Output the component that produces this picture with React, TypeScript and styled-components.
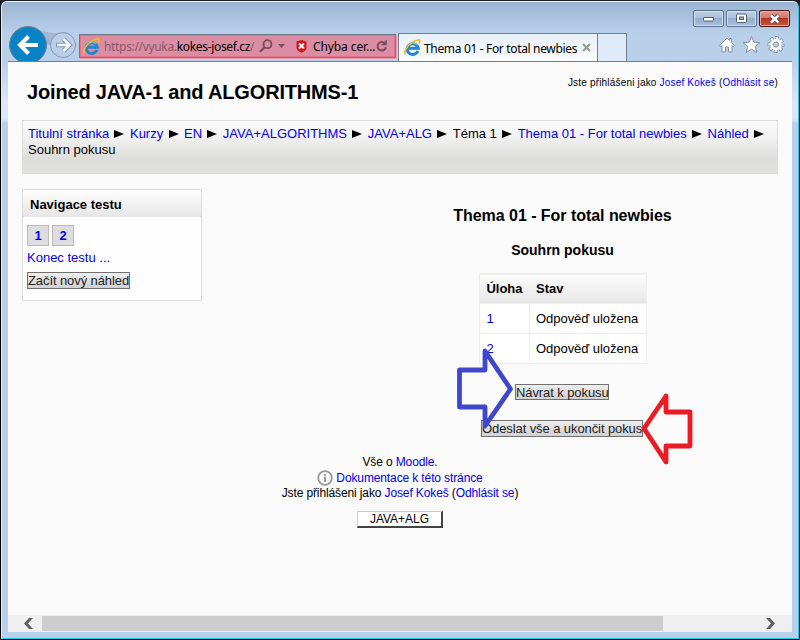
import React from "react";
import styled, { createGlobalStyle } from "styled-components";

const Global = createGlobalStyle`
  * { box-sizing: border-box; }
  html, body { margin: 0; background: #000; overflow: hidden; }
  body { font-family: "Liberation Sans", Arial, sans-serif; font-size: 13px; color: #000; }
`;

const Frame = styled.div`
  width: 800px;
  height: 640px;
  padding: 1px;
  background: linear-gradient(#1c1c24, #000 30px);
`;

const Window = styled.div`
  position: relative;
  height: 638px;
  padding: 0 6px 6px;
  display: flex;
  flex-direction: column;
  border: 1px solid #2cc8e8;
  border-top-color: #f4f8fc;
  border-left-color: #e2edf8;
  border-radius: 6px 6px 0 0;
  background: linear-gradient(#9ab4d2 0, #b9d0ea 32px, #b9d0ea 59px, #dbe7f5 100px, #dbe7f5 117px, #b9d0ea 121px);
`;

const Caption = styled.div`
  height: 31px;
  flex: none;
  display: flex;
  justify-content: flex-end;
  align-items: flex-start;
  gap: 2px;
  padding: 8px 2px 0 0;
`;

const CaptionButton = styled.div<{ $close?: boolean }>`
  width: 31px;
  height: 17px;
  display: flex;
  align-items: center;
  justify-content: center;
  border: 1px solid ${(p) => (p.$close ? "#4d1b1b" : "#59708c")};
  border-radius: 2px;
  box-shadow: inset 0 0 0 1px ${(p) => (p.$close ? "#e6a79e" : "#d3e1f0")};
  background: ${(p) =>
    p.$close
      ? "linear-gradient(#e09a8c, #d17868 46%, #b8371f 50%, #c9573f)"
      : "linear-gradient(#bfd1e6, #abc1da 46%, #94aecb 50%, #a8c0dc)"};
`;

const NavBar = styled.div`
  height: 28px;
  flex: none;
  display: flex;
  align-items: flex-start;
  font-family: "Noto Sans", "Open Sans", sans-serif;
  font-size: 12px;
`;

const NavButtons = styled.svg`
  width: 71px;
  height: 35px;
  margin-top: -7px;
  flex: none;
`;

const AddressBar = styled.div`
  width: 317px;
  height: 24px;
  margin-top: 1px;
  padding: 0 4px 0 3px;
  flex: none;
  display: flex;
  align-items: center;
  border: 1px solid #6f7889;
  box-shadow: inset 0 0 0 1px #e5738b, 1px 1px 0 #e9a0b2;
  background: #db8da3;
`;

const Url = styled.div`
  width: 150px;
  margin-left: 4px;
  white-space: nowrap;
  color: #8a5968;
  letter-spacing: -0.33px;
  b { font-weight: 400; color: #000; }
`;

const ErrorText = styled.span`
  margin: 0 1px 0 6px;
  white-space: nowrap;
  letter-spacing: -0.1px;
`;

const Gap = styled.i<{ $w: number }>`
  width: ${(p) => p.$w}px;
  flex: none;
`;

const Tab = styled.div`
  width: 200px;
  height: 28px;
  margin-left: 2px;
  padding: 0 5px;
  flex: none;
  display: flex;
  align-items: center;
  border: 1px solid #6f8094;
  border-bottom: 0;
  background: linear-gradient(#e9f1fa, #fafafa);
`;

const TabTitle = styled.span`
  width: 156px;
  margin: 2px 2px 0 3px;
  white-space: nowrap;
  letter-spacing: -0.34px;
`;

const NewTab = styled.div`
  width: 29px;
  height: 28px;
  flex: none;
  border: 1px solid #6f8094;
  border-width: 1px 1px 0 0;
  background: #dfebf8;
`;

const Tools = styled.svg`
  width: 68px;
  height: 20px;
  margin: 2px 7px 0 auto;
`;

const Viewport = styled.div`
  position: relative;
  flex: 1;
  display: flex;
  flex-direction: column;
  border-top: 1px solid #6f8094;
  background: #fafafa;
`;

const Page = styled.div`
  flex: 1;
  padding: 0 14px;
`;

const Header = styled.header`
  height: 58px;
  display: flex;
  justify-content: space-between;
  padding-left: 5px;
`;

const SiteTitle = styled.h1`
  margin: 18px 0 0;
  font-size: 20px;
  line-height: 24px;
  letter-spacing: -0.17px;
  white-space: nowrap;
`;

const Login = styled.div`
  margin-top: 14px;
  font-size: 10px;
  line-height: 13px;
  letter-spacing: 0.18px;
  white-space: nowrap;
`;

const Link = styled.a`
  color: #0000f0;
`;

const Crumbs = styled.nav`
  height: 54px;
  padding: 5px 5px 0;
  border: 1px solid #dcdcdc;
  line-height: 16px;
  white-space: nowrap;
  background: linear-gradient(#fafafa, #f3f3f3 14px, #dededd 37px, #e1e1df);
`;

const CrumbLine = styled.div`
  display: flex;
  align-items: center;
`;

const Separator = styled.i`
  width: 10px;
  margin: 0 5.5px 0 5.3px;
  border: solid transparent;
  border-width: 4px 0 4px 10px;
  border-left-color: #000;
`;

const Columns = styled.div`
  display: flex;
  justify-content: space-between;
  align-items: flex-start;
  height: 281px;
  padding-top: 15px;
`;

const Block = styled.aside`
  width: 180px;
  height: 112px;
  border: 1px solid #dcdcdc;
  background: #fdfdfd;
`;

const BlockTitle = styled.h2`
  height: 27px;
  margin: 0;
  padding-left: 7px;
  font-size: 13px;
  line-height: 30px;
  background: linear-gradient(#fdfdfd, #e6e6e6);
`;

const BlockBody = styled.div`
  display: flex;
  flex-direction: column;
  align-items: flex-start;
  padding: 8px 4px;
`;

const Numbers = styled.div`
  display: flex;
  gap: 3px;
`;

const NumberLink = styled.a`
  width: 22px;
  height: 21px;
  border: 1px solid #bbb;
  background: #ddd;
  color: #0000f0;
  font-weight: bold;
  line-height: 20px;
  text-align: center;
`;

const BlockLink = styled(Link)`
  margin: 4px 0 6px;
  line-height: 16px;
`;

const Button = styled.button<{ $w: number; $h?: number }>`
  width: ${(p) => p.$w}px;
  height: ${(p) => p.$h ?? 17}px;
  padding: 0;
  display: flex;
  align-items: center;
  justify-content: flex-start;
  border: 1px solid #707070;
  background: linear-gradient(#efefef, #ddd 55%, #d2d2d4);
  color: #222;
  font: 13px/15px "Liberation Sans", Arial, sans-serif;
  letter-spacing: -0.09px;
  white-space: nowrap;
`;

const Main = styled.main`
  width: 431px;
  display: flex;
  flex-direction: column;
  align-items: center;
`;

const Heading = styled.h2`
  margin: 16px 0 0;
  font-size: 16px;
  line-height: 22px;
  letter-spacing: -0.04px;
`;

const SubHeading = styled.h3`
  margin: 14px 0 14px;
  font-size: 14px;
  line-height: 18px;
`;

const Summary = styled.table`
  width: 168px;
  border-collapse: collapse;
  background: #fff;
  th, td { height: 30px; padding: 0 6.500px 0 7px; text-align: left; border: 1px solid #eee; white-space: nowrap; }
  th { border-color: #eee transparent; background: linear-gradient(#fcfcfc, #e6e6e6); }
  th:first-child { width: 50px; border-left-color: #eee; padding-right: 5px; letter-spacing: -0.05px; }
  th:last-child { border-right-color: #eee; }
  td, th:last-child { padding-left: 6.500px; }
  td:first-child { padding-left: 7px; }
  td { letter-spacing: -0.04px; }
`;

const Actions = styled.div`
  display: flex;
  flex-direction: column;
  align-items: center;
  gap: 20px;
  margin: 20px 1px 0 0;
`;

const Footer = styled.footer`
  display: flex;
  flex-direction: column;
  align-items: center;
  font-size: 12px;
  line-height: 15px;
  letter-spacing: -0.12px;
`;

const DocLine = styled.div`
  height: 16px;
  display: flex;
  align-items: center;
  gap: 3px;
`;

const CourseLink = styled.a`
  width: 86px;
  height: 17px;
  margin-top: 10px;
  border: 1px solid #ccc;
  border-right: 2px solid #444;
  border-bottom: 2px solid #444;
  line-height: 14px;
  letter-spacing: 0;
  text-align: center;
  background: #fff;
`;

const ScrollBar = styled.div`
  height: 17px;
  display: flex;
  align-items: center;
  background: #efefef;
`;

const ScrollArrow = styled.svg`
  width: 10px;
  height: 11px;
  margin-left: 16px;
`;

const Thumb = styled.div`
  width: 621px;
  height: 15px;
  margin: 0 86px 0 8px;
  background: #cdcdcd;
`;

const Pointer = styled.svg<{ $x: number; $y: number }>`
  position: absolute;
  left: ${(p) => p.$x}px;
  top: ${(p) => p.$y}px;
  fill: none;
  stroke-width: 4.8;
  stroke-linejoin: round;
`;

const IeLogo = () => (
  <svg width="17" height="17" viewBox="0 0 17 17" fill="none">
    <path d="M14 12A5.6 5.3 0 1 1 14.3 9.3H4.5" stroke="#2385cf" strokeWidth="3" />
    <path d="M13.2 5.9A5.6 5.3 0 0 0 4.2 6.8" stroke="#6cc8f0" strokeWidth="1.2" />
    <path d="M1.2 15.2C-.4 12.8 3 6.7 8.6 3.1 12.2.8 15.7.2 16 2c.1.8-.4 1.9-.9 2.7" stroke="#f2bd21" strokeWidth="1.7" />
  </svg>
);

const LoginText = () => (
  <>Jste přihlášeni jako <Link>Josef Kokeš</Link> (<Link>Odhlásit se</Link>)</>
);

const crumbs = ["Titulní stránka", "Kurzy", "EN", "JAVA+ALGORITHMS", "JAVA+ALG", "Téma 1", "Thema 01 - For total newbies", "Náhled"];

export default function App() {
  return (
    <Frame>
      <Global />
      <Window>
        <Caption>
          <CaptionButton>
            <svg width="13" height="6"><rect x="1.5" y="1.5" width="10" height="3.5" rx="0.5" fill="#fff" stroke="#535f73" /></svg>
          </CaptionButton>
          <CaptionButton>
            <svg width="13" height="11" fill="none"><rect x="1.5" y="1" width="10" height="8.5" rx="1" fill="#fff" stroke="#535f73" /><rect x="4.5" y="4" width="4" height="2.5" fill="#96afcb" stroke="#535f73" /></svg>
          </CaptionButton>
          <CaptionButton $close>
            <svg width="14" height="12"><path d="M3 2.5l7.5 7M10.5 2.5l-7.5 7" stroke="#50455a" strokeWidth="4.4" /><path d="M3 2.5l7.5 7M10.5 2.5l-7.5 7" stroke="#fff" strokeWidth="2.5" /></svg>
          </CaptionButton>
        </Caption>
        <NavBar>
          <NavButtons viewBox="0 0 71 35" fill="none">
            <path d="M24 1c9 4 15 6 28 6v12H24z" fill="#a3b7d1" />
            <circle cx="20" cy="19" r="18.5" fill="#0a82c6" stroke="#6f8094" />
            <path d="M30 19H13M20.5 10.5L12 19l8.5 8.5" stroke="#fff" strokeWidth="4" />
            <circle cx="55" cy="19" r="12.5" fill="#bbd0e8" stroke="#8498b4" />
            <path d="M48 19h13M55.5 13l6 6-6 6" stroke="#8498b4" strokeWidth="4.6" />
            <path d="M49 19H61M55.5 13l6 6-6 6" stroke="#f3f7fc" strokeWidth="2.6" />
          </NavButtons>
          <AddressBar>
            <IeLogo />
            <Url>https://vyuka.<b>kokes-josef.cz</b>/</Url>
            <Gap $w={5} />
            <svg width="14" height="14" fill="none" stroke="#7c4a5c"><circle cx="8.5" cy="5.2" r="4" strokeWidth="1.8" /><path d="M5.8 8L1 12.8" strokeWidth="2.2" /></svg>
            <Gap $w={5} />
            <svg width="7" height="4"><path d="M0 0h7L3.5 4z" fill="#7c4a5c" /></svg>
            <Gap $w={11} />
            <svg width="11" height="13"><path d="M5.5 0l5 1.5v6c0 2.5-2 4-5 5.3-3-1.300-5-2.800-5-5.300v-6z" fill="#d3161c" /><path d="M3 3.5l5 5M8 3.5l-5 5" stroke="#fff" strokeWidth="1.8" /></svg>
            <ErrorText>Chyba cer...</ErrorText>
            <svg width="12" height="14" fill="none"><path d="M8.8 4.3A4.2 4.2 0 1 0 9.9 8.2" stroke="#7c4a5c" strokeWidth="2" /><path d="M10.8.5v5.7H5.2z" fill="#7c4a5c" /></svg>
          </AddressBar>
          <Tab>
            <IeLogo />
            <TabTitle>Thema 01 - For total newbies</TabTitle>
            <svg width="9" height="9"><path d="M1 1l7 7M8 1L1 8" stroke="#9c9c9c" strokeWidth="2.3" /></svg>
          </Tab>
          <NewTab />
          <Tools viewBox="0 0 68 20" fill="#fff" stroke="#8090a5">
            <path d="M2.500 10.500L10 3l2.500 2.500V3.500h2v4l3 3-1.300 1.200-1.200-1.200v6.500h-3.500v-5h-3v5H5v-6.500l-1.200 1.200z" />
            <path d="M34.500 1.500l2.400 5.700 6 .4-4.600 3.900 1.500 6-5.300-3.300-5.300 3.300 1.500-6-4.600-3.900 6-.4z" />
            <circle cx="59" cy="9.500" r="6.500" fill="none" strokeWidth="4" strokeDasharray="3.400 1.705" strokeDashoffset="1.700" />
            <circle cx="59" cy="9.500" r="6.200" fill="none" stroke="#fff" strokeWidth="2.800" strokeDasharray="2.100 2.770" strokeDashoffset="1.050" />
            <circle cx="59" cy="9.500" r="4.500" stroke="#fff" strokeWidth="2" />
            <circle cx="59" cy="9.500" r="2.600" fill="#b9d0ea" />
          </Tools>
        </NavBar>
        <Viewport>
          <Page>
            <Header>
              <SiteTitle>Joined JAVA-1 and ALGORITHMS-1</SiteTitle>
              <Login><LoginText /></Login>
            </Header>
            <Crumbs>
              <CrumbLine>
                {crumbs.map((name) => (
                  <React.Fragment key={name}>
                    {name === "Téma 1" ? <span>{name}</span> : <Link>{name}</Link>}
                    <Separator />
                  </React.Fragment>
                ))}
              </CrumbLine>
              <CrumbLine>Souhrn pokusu</CrumbLine>
            </Crumbs>
            <Columns>
              <Block>
                <BlockTitle>Navigace testu</BlockTitle>
                <BlockBody>
                  <Numbers><NumberLink>1</NumberLink><NumberLink>2</NumberLink></Numbers>
                  <BlockLink>Konec testu ...</BlockLink>
                  <Button $w={103}>Začít nový náhled</Button>
                </BlockBody>
              </Block>
              <Main>
                <Heading>Thema 01 - For total newbies</Heading>
                <SubHeading>Souhrn pokusu</SubHeading>
                <Summary>
                  <thead><tr><th>Úloha</th><th>Stav</th></tr></thead>
                  <tbody>
                    <tr><td><Link>1</Link></td><td>Odpověď uložena</td></tr>
                    <tr><td><Link>2</Link></td><td>Odpověď uložena</td></tr>
                  </tbody>
                </Summary>
                <Actions>
                  <Button $w={94} $h={16}>Návrat k pokusu</Button>
                  <Button $w={162}>Odeslat vše a ukončit pokus</Button>
                </Actions>
              </Main>
            </Columns>
            <Footer>
              <div>Vše o <Link>Moodle</Link>.</div>
              <DocLine>
                <svg width="16" height="16" fill="none" stroke="#999"><circle cx="8" cy="8" r="6.8" strokeWidth="1.8" /><path d="M8 6.8V12M8 3.8v2" strokeWidth="2" /></svg>
                <Link>Dokumentace k této stránce</Link>
              </DocLine>
              <div><LoginText /></div>
              <CourseLink>JAVA+ALG</CourseLink>
            </Footer>
          </Page>
          <ScrollBar>
            <ScrollArrow viewBox="0 0 10 11"><path d="M5 0h4L4 5.5 9 11H5L0 5.5z" fill="#606060" /></ScrollArrow>
            <Thumb />
            <ScrollArrow viewBox="0 0 10 11"><path d="M5 0H1l5 5.5L1 11h4l5-5.5z" fill="#606060" /></ScrollArrow>
          </ScrollBar>
          <Pointer $x={448} $y={281} width="60" height="90" stroke="#3f48cc">
            <path d="M3.5 27H29V8l25.5 38L29 83V64H3.5z" />
          </Pointer>
          <Pointer $x={630} $y={327} width="60" height="80" stroke="#ed1c24">
            <path d="M6 39.5L28 7v16h24v34H28v16z" />
          </Pointer>
        </Viewport>
      </Window>
    </Frame>
  );
}
